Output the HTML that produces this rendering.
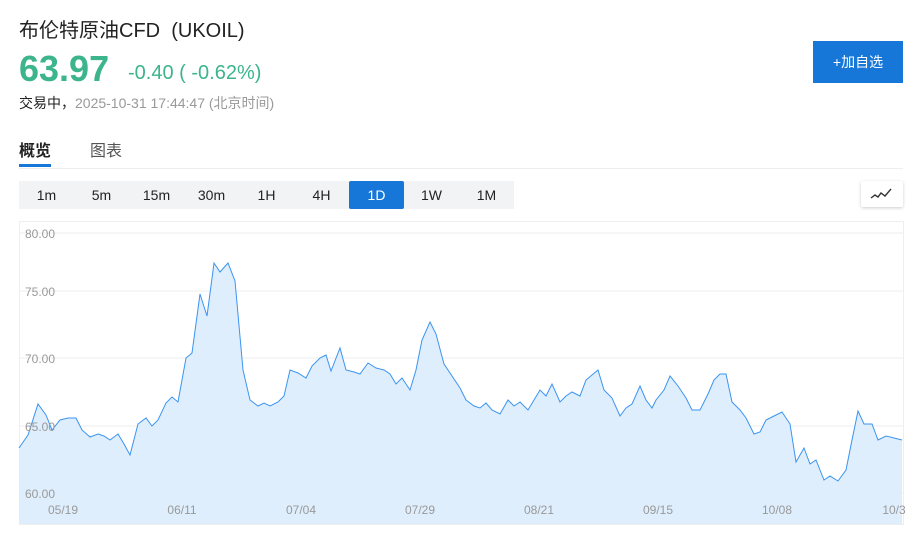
<!DOCTYPE html>
<html><head><meta charset="utf-8"><style>
body{margin:0;width:923px;height:538px;background:#fff;font-family:"Liberation Sans","Noto Sans CJK SC",sans-serif;position:relative;overflow:hidden}
.a{position:absolute;white-space:nowrap}
.tf{position:absolute;left:19px;top:181px;width:495px;height:28px;background:#f2f3f5;display:flex}
.tf div{width:55px;text-align:center;line-height:28px;font-size:14px;color:#222}
.tf .on{background:#1777d9;color:#fff;border-radius:2px}
</style></head><body>
<div class="a" style="left:19px;top:14px;font-size:20px;color:#222">布伦特原油CFD&nbsp;&nbsp;(UKOIL)</div>
<div class="a" style="left:19px;top:48px;font-size:36px;font-weight:bold;color:#3cb48c">63.97</div>
<div class="a" style="left:128px;top:62px;font-size:20px;color:#3cb48c">-0.40 ( -0.62%)</div>
<div class="a" style="left:19px;top:93px;font-size:14px;color:#222">交易中，<span style="color:#999">2025-10-31 17:44:47&nbsp;(北京时间)</span></div>
<div class="a" style="left:813px;top:41px;width:90px;height:42px;background:#1777d9;color:#fff;font-size:14px;line-height:42px;text-align:center">+加自选</div>
<div class="a" style="left:19px;top:137px;font-size:16px;font-weight:bold;color:#222">概览</div>
<div class="a" style="left:19px;top:164px;width:32px;height:3px;background:#1777d9"></div>
<div class="a" style="left:90px;top:137px;font-size:16px;color:#555">图表</div>
<div class="a" style="left:19px;top:168px;width:884px;height:1px;background:#eee"></div>
<div class="tf"><div>1m</div><div>5m</div><div>15m</div><div>30m</div><div>1H</div><div>4H</div><div class="on">1D</div><div>1W</div><div>1M</div></div>
<div class="a" style="left:861px;top:181px;width:42px;height:26px;background:#fff;box-shadow:0 1px 3px rgba(0,0,0,.2);border-radius:2px">
<svg width="42" height="26"><path d="M10 17 L14 14 L17 16 L20 12 L24 15 L30 8" fill="none" stroke="#333" stroke-width="1.4"/></svg></div>
<svg class="a" style="left:0;top:0" width="923" height="538">
<rect x="19.5" y="221.5" width="884" height="303" fill="none" stroke="#eee"/>
<g stroke="#eee"><line x1="20" x2="903" y1="233" y2="233"/><line x1="20" x2="903" y1="291" y2="291"/><line x1="20" x2="903" y1="358" y2="358"/><line x1="20" x2="903" y1="426" y2="426"/><line x1="20" x2="903" y1="493" y2="493"/></g>
<polygon fill="#dfeefd" points="19,524 19,448 28,435 38,404 46,415 52,430 60,420 68,418 76,418 82,430 90,437 98,434 104,436 110,440 118,434 124,444 130,455 138,424 146,418 152,426 158,420 166,403 172,397 178,402 186,358 192,353 200,294 207,316 214,263 220,272 228,263 235,281 243,370 250,400 258,406 264,403 270,406 278,402 284,396 290,370 298,373 306,378 312,366 320,358 326,355 331,371 340,348 346,370 354,372 360,374 368,363 376,368 384,370 390,374 396,384 402,378 410,390 416,370 422,340 430,322 436,334 444,364 452,376 460,388 466,400 474,406 480,408 486,403 492,410 500,414 508,400 514,406 520,402 528,410 534,400 540,390 546,396 552,384 560,402 566,396 572,392 580,396 586,380 598,370 604,390 612,398 620,416 626,408 632,404 640,386 646,400 652,408 656,400 664,390 670,376 678,386 686,398 692,410 700,410 708,394 714,380 720,374 726,374 732,402 740,410 746,418 754,434 760,432 766,420 774,416 782,412 790,424 796,462 804,448 810,464 816,460 824,480 830,476 838,481 846,470 852,440 858,411 864,424 872,424 878,440 886,436 894,438 902,440 902,524"/>
<polyline fill="none" stroke="#3b94f0" stroke-width="1" points="19,448 28,435 38,404 46,415 52,430 60,420 68,418 76,418 82,430 90,437 98,434 104,436 110,440 118,434 124,444 130,455 138,424 146,418 152,426 158,420 166,403 172,397 178,402 186,358 192,353 200,294 207,316 214,263 220,272 228,263 235,281 243,370 250,400 258,406 264,403 270,406 278,402 284,396 290,370 298,373 306,378 312,366 320,358 326,355 331,371 340,348 346,370 354,372 360,374 368,363 376,368 384,370 390,374 396,384 402,378 410,390 416,370 422,340 430,322 436,334 444,364 452,376 460,388 466,400 474,406 480,408 486,403 492,410 500,414 508,400 514,406 520,402 528,410 534,400 540,390 546,396 552,384 560,402 566,396 572,392 580,396 586,380 598,370 604,390 612,398 620,416 626,408 632,404 640,386 646,400 652,408 656,400 664,390 670,376 678,386 686,398 692,410 700,410 708,394 714,380 720,374 726,374 732,402 740,410 746,418 754,434 760,432 766,420 774,416 782,412 790,424 796,462 804,448 810,464 816,460 824,480 830,476 838,481 846,470 852,440 858,411 864,424 872,424 878,440 886,436 894,438 902,440"/>
<g fill="#999" font-size="12" font-family="Liberation Sans,sans-serif"><text x="25" y="238">80.00</text><text x="25" y="296">75.00</text><text x="25" y="363">70.00</text><text x="25" y="431">65.00</text><text x="25" y="498">60.00</text>
<g text-anchor="middle"><text x="63" y="514">05/19</text><text x="182" y="514">06/11</text><text x="301" y="514">07/04</text><text x="420" y="514">07/29</text><text x="539" y="514">08/21</text><text x="658" y="514">09/15</text><text x="777" y="514">10/08</text><text x="894" y="514">10/3</text></g></g>
</svg>
</body></html>
